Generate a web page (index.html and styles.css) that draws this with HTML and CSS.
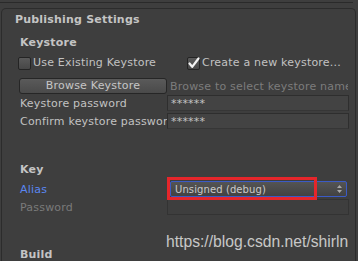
FILE: index.html
```html
<!DOCTYPE html>
<html>
<head>
<meta charset="utf-8">
<link rel="stylesheet" href="styles.css">
</head>
<body>
<div class="topline"></div>
<div class="panel">
  <div class="title">Publishing Settings</div>
  <div class="section">
    <div class="header hdr-keystore">Keystore</div>
    <div class="checks">
      <div class="check-item first"><span class="box"></span><span class="clabel">Use Existing Keystore</span></div>
      <div class="check-item"><span class="box checked"><svg width="13" height="13" viewBox="0 0 13 13"><path d="M2.5 6.5 L5.2 9.8 L11.5 1.5" fill="none" stroke="#f2f2f2" stroke-width="2.2" stroke-linecap="round" stroke-linejoin="round"/></svg></span><span class="clabel">Create a new keystore...</span></div>
    </div>
    <div class="row browse-row">
      <div class="button">Browse Keystore</div>
      <div class="hint">Browse to select keystore name</div>
    </div>
    <div class="row r-kp">
      <div class="label">Keystore password</div>
      <div class="field">******</div>
    </div>
    <div class="row r-confirm">
      <div class="label">Confirm keystore password</div>
      <div class="field">******</div>
    </div>
    <div class="header hdr-key">Key</div>
    <div class="row r-alias">
      <div class="label alias">Alias</div>
      <div class="cell">
        <div class="popup"><span>Unsigned (debug)</span><svg class="arrows" width="5" height="8" viewBox="0 0 5 8"><path d="M0 3 L2.5 0 L5 3 Z M0 5 L2.5 8 L5 5 Z" fill="#a8a8a8"/></svg></div>
        <div class="redbox"></div>
      </div>
    </div>
    <div class="row r-pass">
      <div class="label disabled">Password</div>
      <div class="field empty"></div>
    </div>
    <div class="header hdr-build">Build</div>
  </div>
</div>
<div class="watermark">https://blog.csdn.net/shirln</div>
</body>
</html>
```
FILE: styles.css
```css
html, body {
  margin: 0;
  padding: 0;
}
body {
  width: 358px;
  height: 261px;
  overflow: hidden;
  background: #3e3e3e;
  font-family: "DejaVu Sans", sans-serif;
  font-size: 11px;
  letter-spacing: 0.2px;
  color: #c2c2c2;
  position: relative;
}
.topline {
  height: 2px;
  border-bottom: 1px solid #2a2a2a;
  margin-bottom: 5px;
  margin-right: 5px;
}
.panel {
  box-sizing: border-box;
  width: 355px;
  height: 260px;
  margin-left: 1px;
  border: 1px solid #2c2c2c;
  border-bottom: none;
  border-radius: 5px 5px 0 0;
  background: #3e3e3e;
}
.title {
  margin-top: 4px;
  padding-left: 13px;
  font-weight: bold;
  line-height: 13px;
  color: #c4c4c4;
}
.section {
  padding-left: 16px;
}
.header {
  font-weight: bold;
  line-height: 13px;
  color: #c4c4c4;
  padding-left: 2px;
}
.hdr-keystore { margin-top: 10px; }
.hdr-key { margin-top: 34px; }
.hdr-build { margin-top: 33px; }
.checks {
  display: flex;
  margin-top: 8px;
  height: 13px;
}
.check-item {
  display: flex;
  align-items: flex-start;
  line-height: 11px;
}
.check-item.first {
  width: 169px;
}
.box {
  box-sizing: border-box;
  width: 13px;
  height: 13px;
  border: 1px solid #242424;
  border-radius: 2px;
  background: linear-gradient(#5a5a5a, #474747);
  margin-right: 2px;
  position: relative;
}
.box svg {
  position: absolute;
  left: -1px;
  top: -1px;
}
.clabel {
  white-space: nowrap;
}
.row {
  display: flex;
  height: 16px;
  align-items: center;
  line-height: 13px;
}
.browse-row { margin-top: 8px; }
.r-kp { margin-top: 1px; }
.r-confirm { margin-top: 2px; }
.r-alias { margin-top: 5px; }
.r-pass { margin-top: 2px; }
.button {
  box-sizing: border-box;
  margin-left: 1px;
  width: 148px;
  height: 16px;
  border: 1px solid #262626;
  border-radius: 3px;
  background: linear-gradient(#5a5a5a, #4a4a4a);
  text-align: center;
  line-height: 14px;
  color: #c6c6c6;
}
.hint {
  margin-left: 3px;
  width: 178px;
  overflow: hidden;
  white-space: nowrap;
  color: #7c7c7c;
}
.label {
  width: 149px;
  padding: 0 2px;
  box-sizing: border-box;
  white-space: nowrap;
  overflow: hidden;
}
.label.alias { color: #5a86f2; }
.label.disabled { color: #7a7a7a; }
.field {
  box-sizing: border-box;
  width: 182px;
  height: 16px;
  border: 1px solid #2e2e2e;
  border-bottom-color: #363636;
  background: #434343;
  padding-left: 3px;
  line-height: 16px;
  color: #c4c4c4;
}
.field.empty {
  background: #3e3e3e;
  border-color: #333333;
}
.cell {
  position: relative;
  width: 182px;
  height: 16px;
}
.popup {
  box-sizing: border-box;
  margin-left: 3px;
  width: 177px;
  height: 16px;
  border: 1px solid #3b5bc6;
  border-radius: 2px;
  background: linear-gradient(#545454, #424242);
  display: flex;
  align-items: center;
  justify-content: space-between;
  padding: 0 4px 0 4px;
  color: #cacaca;
  font-size: 10px;
  letter-spacing: 0.1px;
}
.arrows {
  display: block;
}
.redbox {
  position: absolute;
  left: 0;
  top: -4px;
  width: 150px;
  height: 23px;
  box-sizing: border-box;
  border: 3px solid #e5262b;
}
.watermark {
  position: absolute;
  left: 166px;
  top: 234px;
  font-family: "Liberation Sans", Arial, sans-serif;
  font-size: 15.7px;
  letter-spacing: 0;
  line-height: 1;
  color: rgba(255, 255, 255, 0.72);
  white-space: nowrap;
}
```
